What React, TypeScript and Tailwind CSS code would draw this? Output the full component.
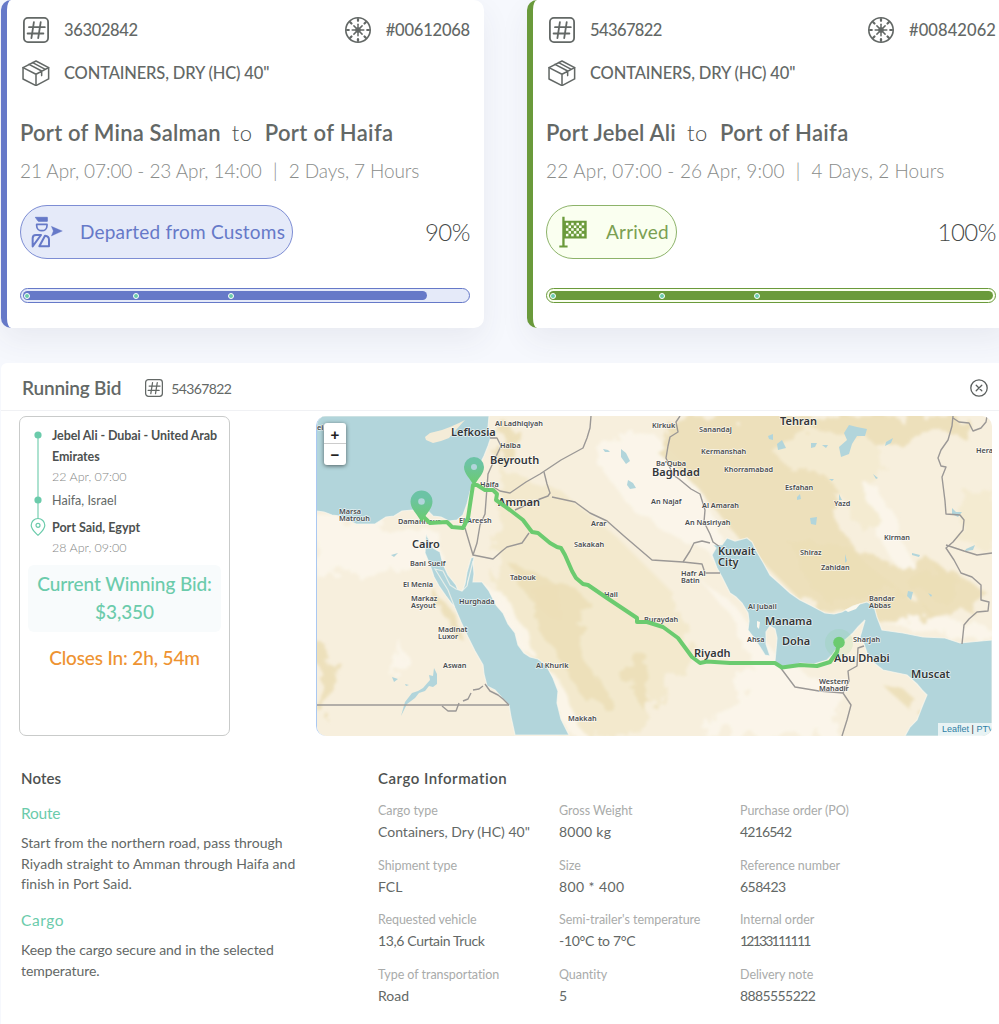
import React from 'react';
import clsx from 'clsx';

function HashIcon({ className }: { className?: string }) {
  return (
    <svg viewBox="0 0 26 26" className={className} fill="none" stroke="#636866" strokeWidth="1.8" strokeLinecap="round">
      <rect x="0.9" y="0.9" width="24.2" height="24.2" rx="4" />
      <path d="M10.9 5.2 8.4 21.2M17.7 5.2l-2.5 16M6 10.2h15.8M4.6 16.5h15.8" />
    </svg>
  );
}

function BoxIcon() {
  return (
    <svg viewBox="67 180 84 80" className="w-7 h-[26.6px]" fill="none" stroke="#636866" strokeWidth="4.6" strokeLinejoin="round" strokeLinecap="round">
      <path d="M109 183l38 20v34l-38 20-39-20v-34z" />
      <path d="M70 203l39 20 38-20M109 223v34M88 193l38 20v14M99 188l38 20" />
    </svg>
  );
}

const spokes = [0, 45, 90, 135, 180, 225, 270, 315];

function WheelIcon() {
  return (
    <svg viewBox="0 0 26 26" className="size-[26px]" fill="none" stroke="#636866" strokeWidth="1.5" strokeLinecap="round">
      <circle cx="13" cy="13" r="12.2" strokeWidth="1.6" />
      <circle cx="13" cy="13" r="2" fill="#636866" />
      {spokes.map((a) => (
        <g key={a} transform={`rotate(${a} 13 13)`}>
          <path d="M13 11V7.2" />
          <path d="M13 3.8V2" strokeWidth="2.2" />
        </g>
      ))}
    </svg>
  );
}

function OfficerIcon() {
  return (
    <svg viewBox="94 76 96 96" className="size-8" fill="none" stroke="#6679c8" strokeWidth="6" strokeLinejoin="round">
      <path d="M107 80h36v12h-27z" fill="#6679c8" strokeWidth="2.5" />
      <path d="M111 101h31v4c0 9-7 15-15.500 15S111 114 111 105z" strokeWidth="5" />
      <path d="M99 167v-24c0-6 4-10 10-10h15zM119 167l17-32c8 1 12 5 12 12v20z" />
      <path d="M155 107l33 14-33 15 6-15z" fill="#6679c8" strokeWidth="1" />
    </svg>
  );
}

function FlagIcon() {
  const cells = [];
  for (let r = 0; r < 5; r++) {
    for (let c = 0; c < 7; c++) {
      if ((r + c) % 2 === 0) {
        cells.push(<rect key={`${r}-${c}`} x={139 + c * 8} y={96 + r * 8.4} width="7.500" height="7.500" fill="#fafff0" />);
      }
    }
  }
  return (
    <svg viewBox="118 76 88 96" className="w-[29px] h-8">
      <path d="M128 78h7v12h67v54h-67v21h9v6h-25v-6h9z" fill="#6a9a3b" />
      {cells}
    </svg>
  );
}

type Shipment = {
  id: string;
  order: string;
  from: string;
  to: string;
  dates: string;
  duration: string;
  status: string;
  percent: string;
  fill: string;
  green?: boolean;
};

const shipments: Shipment[] = [
  {
    id: '36302842',
    order: '#00612068',
    from: 'Port of Mina Salman',
    to: 'Port of Haifa',
    dates: '21 Apr, 07:00 - 23 Apr, 14:00',
    duration: '2 Days, 7 Hours',
    status: 'Departed from Customs',
    percent: '90%',
    fill: '91%',
  },
  {
    id: '54367822',
    order: '#00842062',
    from: 'Port Jebel Ali',
    to: 'Port of Haifa',
    dates: '22 Apr, 07:00 - 26 Apr, 9:00',
    duration: '4 Days, 2 Hours',
    status: 'Arrived',
    percent: '100%',
    fill: '100%',
    green: true,
  },
];

function ShipmentCard({ s }: { s: Shipment }) {
  return (
    <div
      className={clsx(
        'w-[483px] h-[328px] shrink-0 bg-white rounded-[10px] border-l-[6px] pl-[13px] pr-[14px] pt-4 text-[#636866] shadow-[0_12px_30px_rgba(60,60,80,0.07)]',
        s.green ? 'border-[#6a9a3b]' : 'border-[#6679c8]'
      )}
    >
      <div className="flex items-center h-7 text-[16.5px] font-medium">
        <HashIcon className="size-[26px] ml-[3px]" />
        <span className={clsx('ml-[15px]', s.green ? 'tracking-[-0.6px]' : 'tracking-[-0.35px]')}>{s.id}</span>
        <span className="ml-auto">
          <WheelIcon />
        </span>
        <span className={clsx('ml-[15px]', s.green ? 'tracking-[0.1px]' : 'tracking-[-0.2px]')}>{s.order}</span>
      </div>
      <div className="flex items-center h-7 mt-[15px] text-[16.5px] font-medium">
        <span className="ml-[2px]">
          <BoxIcon />
        </span>
        <span className="ml-[14px] tracking-[-0.16px]">CONTAINERS, DRY (HC) 40"</span>
      </div>

      <div className="flex items-center h-8 mt-[29px] text-[22px] whitespace-nowrap">
        <span className="font-semibold tracking-[0.2px]">{s.from}</span>
        <span className="ml-[11px] w-[22px] font-light text-[#4d514f] tracking-[0.5px]">to</span>
        <span className="ml-[11px] font-semibold tracking-[0.35px]">{s.to}</span>
      </div>
      <div className="flex items-center h-7 mt-[9px] text-[19px] font-light text-[#898c8a] whitespace-nowrap">
        <span className={s.green ? 'tracking-[0.2px]' : 'tracking-[-0.08px]'}>{s.dates}</span>
        <span className="w-[27px] text-center">|</span>
        <span className={s.green ? 'tracking-[0.05px]' : 'tracking-[-0.1px]'}>{s.duration}</span>
      </div>

      <div className="flex items-center justify-between mt-5">
        <div
          className={clsx(
            'flex items-center h-[54px] rounded-full border pr-[7px] text-[19px] tracking-[0.2px]',
            s.green ? 'pl-[12px] gap-[18px] border-[#8db36a] bg-[#fafff0] text-[#7aa052]' : 'pl-[10px] gap-[17px] border-[#7d8dd4] bg-[#e5eaf9] text-[#6679c8]'
          )}
        >
          {s.green ? <FlagIcon /> : <OfficerIcon />}
          <span>{s.status}</span>
        </div>
        <span className="text-[24px] font-light text-[#454947] tracking-[-0.5px]">{s.percent}</span>
      </div>

      <div
        className={clsx(
          'relative h-[15px] mt-[29px] rounded-full border-[1.500px] p-[2px]',
          s.green ? 'border-[#6a9a3b] bg-[#fafff0]' : 'border-[#6679c8] bg-[#e5eaf9]'
        )}
      >
        <div className={clsx('h-[9px] rounded-full', s.green ? 'bg-[#6a9a3b]' : 'bg-[#6679c8]')} style={{ width: s.fill }} />
        <span className="absolute left-[3px] top-[3.500px] size-[6px] rounded-full border-[1.500px] border-white bg-[#6bcbab]" />
        <span className="absolute left-[112px] top-[3.500px] size-[6px] rounded-full border-[1.500px] border-white bg-[#6bcbab]" />
        <span className="absolute left-[207px] top-[3.500px] size-[6px] rounded-full border-[1.500px] border-white bg-[#6bcbab]" />
      </div>
    </div>
  );
}

// [label, x, baseline]
const cities: [string, number, number][] = [
  ['Lefkosia', 451, 436],
  ['Beyrouth', 490, 464],
  ['Amman', 498, 506],
  ['Cairo', 412, 548],
  ['Baghdad', 652, 476],
  ['Tehran', 780, 425],
  ['Kuwait', 718, 555],
  ['City', 718, 566],
  ['Riyadh', 694, 657],
  ['Manama', 765, 625],
  ['Doha', 782, 645],
  ['Abu Dhabi', 834, 662],
  ['Muscat', 911, 678],
];

const towns: [string, number, number][] = [
  ['ei', 317, 430],
  ['Al Ladhiqiyah', 495, 426],
  ['Halba', 500, 448],
  ['Haifa', 480, 487],
  ['El Areesh', 459, 523],
  ['Damanhour', 398, 524],
  ['Marsa', 339, 514],
  ['Matrouh', 339, 521],
  ['Bani Sueif', 410, 566],
  ['El Menia', 403, 587],
  ['Markaz', 411, 601],
  ['Asyout', 411, 608],
  ['Hurghada', 459, 604],
  ['Madinat', 438, 632],
  ['Luxor', 438, 639],
  ['Aswan', 443, 668],
  ['Tabouk', 510, 580],
  ['Al Khurik', 536, 668],
  ['Makkah', 568, 721],
  ['Hail', 604, 597],
  ['Buraydah', 644, 622],
  ['Hafr Al', 681, 576],
  ['Batin', 681, 583],
  ['Al Jubail', 748, 609],
  ['Ahsa', 747, 642],
  ['Arar', 591, 526],
  ['Sakakah', 574, 547],
  ['An Najaf', 651, 504],
  ['Al Amarah', 702, 508],
  ['An Nasiriyah', 685, 525],
  ["Ba'Quba", 656, 466],
  ['Kirkuk', 652, 428],
  ['Sanandaj', 699, 432],
  ['Kermanshah', 701, 454],
  ['Khorramabad', 724, 472],
  ['Esfahan', 785, 490],
  ['Yazd', 834, 506],
  ['Kirman', 884, 540],
  ['Shiraz', 800, 555],
  ['Zahidan', 821, 570],
  ['Hera', 976, 453],
  ['Bandar', 869, 601],
  ['Abbas', 869, 608],
  ['Sharjah', 853, 642],
  ['Western', 819, 684],
  ['Mahadir', 819, 691],
];

const seas = [
  'M316 416V511L324 512 332 515 340 516 348 520 356 524 368 524 375 524 386 517 394 516 402 511 412 510 420 512 427 510 433 516 441 517 449 521 457 520 463 515 467 504 470 492 475 478 479 466 484 456 488 446 491 437 488 428 489 416z',
  'M426 534l4 8 3 6 7 4 3 12 5 11 8 10 3 8 3-1 3-8 2-12 4-14 3-1-2 12-4 12-1 12-3 6 4 7-8 4-8-6-6-8-7-10-5-9-4-12-5-12z',
  'M435 569l8 2 7 14 6 4 6 2 5-5 3-13 3-12 1 13-1 8 9 0 7 9 7 14 7 8 5 11 7 9 3 12 6 8 6 4 8 2 8 6 7 13 5 13-1 12 4 16 8 16H515L511 717 509 705 502 698 495 690 487 686 484 674 483 665 475 651 468 637 461 622 455 608 448 590z',
  'M712 555L716 548 713 545 722 545 727 538 735 541 747 538 752 542 757 552 764 564 770 575 779 583 790 593 800 600 810 605 825 613 834 614 842 612 853 606 867 602 874 606 877 617 882 630 903 633 923 637 945 638 960 643 992 640V736H905L910 727 917 720 922 707 927 695 922 690 917 684 907 675 883 670 874 663 867 653 864 644 860 637 865 620 858 627 853 633 845 640 837 648 832 655 827 660 814 664 800 663 788 668 780 666 775 661 776 650 777 638 775 629 770 626 766 632 766 644 770 656 765 655 760 647 754 638 748 630 749 621 748 613 742 603 736 597 730 593 726 585 722 577 717 568z',
];

const borders = [
  'M591 416l-1 12-3 10-4 10-22 12-21 14-14 8-16 11-10-2-8-5',
  'M544 472l3 12 3 9-2 3-8 3-25 11',
  'M552 497l23 5 15 11 17 8 17 15 14 12 14 12 31 2 19 2 3 9h15',
  'M683 562l7-11 4-8 8-2 8 2',
  'M680 416l-4 6 2 10-8 5-2 9-2 12 7 17 6 4 12 10 9 5 5 16-1 12 6 12 3 8 7 5',
  'M473 555l20 4 9-8 5-4 15-4 7-10',
  'M465 528l8 27 4-12 3-18 5-11 3-40 4-9 9-19-4-8-7 0',
  'M316 705h193',
  'M485 684l5 7 8 4 5 4 6 6',
  'M442 706l6 5h8l3-8M463 701l5-2 3-6M473 690l6-1 4-3',
  'M780 667l15 20 24 4 24 2 8 12-4 15-5 16M843 693l6-12-1-10 9-5 1-18 6-2',
  'M953 416l-1 10-4 14-7 10-3 8 3 8 5 1-4 10 3 24 1 13 14 1 4 5-1 10-10 12-7 6 8 12 7 13 11 4 9 8 0 15 8 2-1 9-11 1-8 7-5 6-2 19',
  'M946 545l18 6 13 4 15-2M953 418l6 4 10 1 4 8 8-3 5-6 1-6',
];

const highlands = [
  'M675 416h292l-5 20-60 4-60 16-10 54 20 40 60 50 30 16-50 6-90-20-60-60-50-60-35-30z',
  'M540 596l25-8 20 8 2 18-14 15 20 40 20 40-25-6-20-28-15-28-17-20z',
  'M790 545l60 0 40 20 40-5 30 20-10 20-70-8-50 10-20-12z',
  'M505 560l30 12 30 20-15 25-22-20z',
  'M905 580l50-10 30 20-15 20-40 5z',
  'M880 682l20 4 18 16-8 8-18-16z',
  'M316 640l15 10 5 40-20 20z',
  'M436 590l12 20 15 30-10-6-14-28z',
  'M632 650l20 10-10 20 12 25-10 6-18-26z',
  'M505 425l14 4-8 30-12 8z',
];

const lowlands = [
  'M600 440l50-10 40 40 30 60 10 30-40-12-60-40-30-40z',
  'M862 480l16 6 28 54 6 30-20-10-22-40z',
  'M316 515l60 12 60 0 6 30-40 10-86 10z',
  'M700 580l35 40 20 50-50 66h130l10-50-60-20-50-60z',
  'M520 650l30 50 20 36h14l-24-56z',
  'M485 590l20 5 30 60-15-5z',
  'M885 625l60 10 45 5v-15l-60-8z',
  'M395 640l6 0 0 30-8 10z',
];

const lakes = [
  'M621 449l5 4 4 8-4 3-5-7zM628 480l5 3 3 5-6 1-3-4zM603 449l5 1 2 2-5 0z',
  'M849 425l8 2 10 2-2 7-8 0-5 8-3 10-8 3-2-10 8-7-3-7zM777 444l5-4 4 8-8 2zM811 443l6 0-2 4-4 1zM886 442l7-4-2 5-6 3z',
  'M810 518l7-1-1 8-5-1zM797 497l3-3 1 5-4 1zM822 445l6 0-2 3zM873 474l5 4-2 1zM839 494l3 6-3 0zM829 479l5 0-2 2z',
  'M952 508l4 4 6 0-4 5-6-3zM966 549l9-4-2 5-8 1zM912 553l8 2-1 2-7-2zM908 591l5 1-2 8-4-4zM768 436l5-2 0 6-4-1z',
  'M434 668l3 6 0 10-4 3-4-1-4 5-6 2-4 5-8 6-6 12 4-14 7-9 6-2 5-3 7-8-1-5 4 1zM392 677l6 2-4 3zM405 684l4 1-3 1z',
  'M391 555l7-2-4 4zM845 554l2 7-2 2zM776 411l4 0 0 5-4 0zM928 593l4 2-1 2z',
];

const route =
  'M421.500 515L430 523 447 522 452 527 463 528 468 518 473 485 477 485 485 490 493 490 497 494 496 500 510 510 523 520 532 532 538 533 550 543 557 547 561 548 565 555 572 571 576 578 583 584 588 585 607 598 637 618 637 622 647 622 663 627 678 638 692 657 700 663 707 661.500 730 663 775 663 782 667.500 800 665 817 666 830 662 837 652 839 643';

function Pin({ x, y, r }: { x: number; y: number; r: number }) {
  return (
    <g transform={`translate(${x} ${y}) scale(${r / 10})`}>
      <path d="M0-10a10 10 0 0 1 10 10c0 7-6 11-10 19C-4 11-10 7-10 0A10 10 0 0 1 0-10z" fill="url(#pin)" />
      <circle r="3" fill="#b2d5db" />
    </g>
  );
}

function RouteMap() {
  return (
    <div className="relative w-[676px] h-80 shrink-0 rounded-[10px] overflow-hidden border-l border-[#aac8f2]">
      <svg viewBox="317 416 676 320" className="block w-[676px] h-80">
        <defs>
          <linearGradient id="pin" x1="0" y1="0" x2="0" y2="1">
            <stop offset="0.2" stopColor="#6cc3a5" />
            <stop offset="0.9" stopColor="#6bcb72" />
          </linearGradient>
          <filter id="relief" x="-10%" y="-10%" width="120%" height="120%">
            <feTurbulence type="fractalNoise" baseFrequency="0.045" numOctaves="4" seed="4" />
            <feDisplacementMap in="SourceGraphic" scale="34" />
            <feGaussianBlur stdDeviation="1.8" />
          </filter>
        </defs>
        <rect x="316" y="416" width="677" height="320" fill="#f7efdd" />
        <g filter="url(#relief)">
          <path d="M500 470l60 20 60 50 60 60 10 60-60 76h-70l-30-80-40-80z" fill="#f3e9cd" />
          {lowlands.map((d) => (
            <path key={d} d={d} fill="#fbf7ec" fillOpacity="0.85" />
          ))}
          {highlands.map((d) => (
            <path key={d} d={d} fill="#ecdfb8" fillOpacity="0.9" />
          ))}
          <path d="M790 425l80 15 20 20-30 20 20 40-20 10-30-50-50-20z" fill="#f4ebd1" />
          <path d="M960 500l35-10v60l-35-5z" fill="#f4ebd1" />
        </g>
        {seas.map((d) => (
          <path key={d} d={d} fill="#b2d5db" stroke="#fbf8ee" strokeWidth="1.2" strokeOpacity="0.7" />
        ))}
        <path d="M425 437l5-4 12-3 8-3 9-4 6-3-10 11-6 7-8 3-8 2-7-3z" fill="#f4ecd8" />
        <path d="M757 621l3 1-1 7-2-2zM845 610l8-4 8-3-5 6-8 3z" fill="#fbf8ee" />
        {lakes.map((d) => (
          <path key={d} d={d} fill="#b2d5db" />
        ))}
        {borders.map((d) => (
          <path key={d} d={d} fill="none" stroke="#9b9896" strokeWidth="1.4" strokeLinejoin="round" />
        ))}

        <g fontFamily="'Noto Sans', sans-serif" fill="#333638" stroke="#fff" strokeOpacity="0.7" strokeWidth="1.4" paintOrder="stroke" strokeLinejoin="round">
          <g fontSize="11" fontWeight="600">
            {cities.map(([name, x, y]) => (
              <text key={name} x={x} y={y}>
                {name}
              </text>
            ))}
          </g>
          <g fontSize="7.300" fontWeight="600" fill="#4a4c4e">
            {towns.map(([name, x, y]) => (
              <text key={name} x={x} y={y}>
                {name}
              </text>
            ))}
          </g>
        </g>

        <circle cx="839" cy="643" r="14" fill="#6bcb72" fillOpacity="0.12" />
        <path d={route} fill="none" stroke="#6bcb6f" strokeWidth="4" strokeLinejoin="round" strokeLinecap="round" />
        <circle cx="839" cy="642.500" r="5.800" fill="#6bcb6f" />
        <Pin x={421.5} y={501.5} r={11} />
        <Pin x={474} y={467} r={10} />
      </svg>

      <div className="absolute left-[7px] top-[7px] w-[22px] rounded-[3px] bg-white shadow-[0_1px_4px_rgba(0,0,0,0.55)] font-['Liberation_Sans',sans-serif] text-[15px] font-bold text-center text-[#222]">
        <div className="h-[21px] leading-[24px] border-b border-[#ccc]">+</div>
        <div className="h-[21px] leading-[22px]">−</div>
      </div>
      <div className="absolute left-[621px] bottom-0 h-[13px] pl-1 bg-white/70 font-['Liberation_Sans',sans-serif] text-[9px] leading-[13px] whitespace-nowrap text-[#2e7fa5]">
        Leaflet <span className="text-[#333]">|</span> PTV
      </div>
    </div>
  );
}

function BidSummary() {
  return (
    <div className="w-[211px] h-80 shrink-0 rounded-[7px] border border-[#c9cbca] pt-2 text-[12.500px] text-[#4d5150]">
      <div className="flex pl-[10px]">
        <svg viewBox="0 0 16 112" className="w-4 h-28 mt-[3px]" fill="none">
          <path d="M8 7v84" stroke="#a5dfcb" strokeWidth="1.800" />
          <circle cx="8" cy="7" r="3.600" fill="#6bcbab" />
          <circle cx="8" cy="72" r="3.600" fill="#6bcbab" />
          <path d="M8 90.500a6.800 6.800 0 0 1 6.800 6.800c0 4.200-3.600 7-6.800 10-3.200-3-6.800-5.800-6.800-10A6.800 6.800 0 0 1 8 90.500z" fill="#fff" stroke="#6bcbab" strokeWidth="1.200" />
          <circle cx="8" cy="97.300" r="2" stroke="#6bcbab" strokeWidth="1.200" />
        </svg>
        <div className="ml-[6px] whitespace-nowrap">
          <p className="font-bold leading-[21px] tracking-[-0.09px]">
            Jebel Ali - Dubai - United Arab
            <br />
            Emirates
          </p>
          <p className="leading-[19px] font-light text-[#858786]">22 Apr, 07:00</p>
          <p className="mt-[5px] leading-5 tracking-[0.05px] text-[#636866]">Haifa, Israel</p>
          <p className="mt-[7px] leading-5 font-bold">Port Said, Egypt</p>
          <p className="leading-5 font-light text-[#858786]">28 Apr, 09:00</p>
        </div>
      </div>
      <div className="mx-2 mt-[7px] h-[67px] pt-[5px] rounded-[6px] bg-[#f8fbfc] text-center text-[19px] leading-7 font-medium tracking-[-0.1px] text-[#6bcbab]">
        Current Winning Bid:
        <br />
        $3,350
      </div>
      <p className="mt-3 text-center text-[19px] leading-7 font-medium tracking-[-0.15px] text-[#ee9331]">Closes In: 2h, 54m</p>
    </div>
  );
}

// [label, value, value tracking]
const cargo = [
  ['Cargo type', 'Containers, Dry (HC) 40"', ''],
  ['Gross Weight', '8000 kg', 'tracking-[0.25px]'],
  ['Purchase order (PO)', '4216542', 'tracking-[-0.8px]'],
  ['Shipment type', 'FCL', ''],
  ['Size', '800 * 400', 'tracking-[0.4px]'],
  ['Reference number', '658423', 'tracking-[-0.5px]'],
  ['Requested vehicle', '13,6 Curtain Truck', 'tracking-[-0.36px]'],
  ["Semi-trailer's temperature", '-10°C to 7°C', 'tracking-[-0.3px]'],
  ['Internal order', '12133111111', 'tracking-[-1.800px]'],
  ['Type of transportation', 'Road', ''],
  ['Quantity', '5', ''],
  ['Delivery note', '8885555222', 'tracking-[-0.6px]'],
];

export default function App() {
  return (
    <div className="w-[999px] h-[1024px] overflow-hidden bg-[#f6f8fd] font-['Lato',sans-serif]">
      <div className="flex gap-[43px] pl-px">
        {shipments.map((s) => (
          <ShipmentCard key={s.id} s={s} />
        ))}
      </div>

      <div className="ml-px mt-[35px] h-[661px] bg-white rounded-tl-[6px] text-[#636866]">
        <div className="flex items-center h-12 pt-[3px] pl-[21px] pr-[11px] border-b border-[#f0f1f4]">
          <h2 className="text-[19px] font-semibold tracking-[-0.2px]">Running Bid</h2>
          <HashIcon className="size-[18px] ml-6" />
          <span className="ml-[8px] text-[14px] tracking-[-0.6px]">54367822</span>
          <svg viewBox="0 0 18 18" className="size-[18px] ml-auto" fill="none" stroke="#5b5f5e" strokeWidth="1.300" strokeLinecap="round">
            <circle cx="9" cy="9" r="8.200" />
            <path d="M6.200 6.200l5.600 5.600M11.800 6.200l-5.600 5.600" />
          </svg>
        </div>

        <div className="flex pt-[5px] pl-[18px]">
          <BidSummary />
          <div className="ml-[86px]">
            <RouteMap />
          </div>
        </div>

        <div className="flex pl-5 pt-[31px]">
          <div className="w-[357px] text-[14px]">
            <h3 className="text-[15px] leading-[22px] font-semibold tracking-[0.1px] text-[#4d5150]">Notes</h3>
            <h4 className="mt-[12px] text-[15.500px] leading-6 tracking-[-0.2px] text-[#6bcbab]">Route</h4>
            <p className="mt-2 leading-[20.700px] tracking-[0.03px]">
              Start from the northern road, pass through
              <br />
              Riyadh straight to Amman through Haifa and
              <br />
              finish in Port Said.
            </p>
            <h4 className="mt-[13px] text-[15.500px] leading-6 tracking-[0.6px] text-[#6bcbab]">Cargo</h4>
            <p className="mt-2 leading-[20.700px] tracking-[-0.07px]">
              Keep the cargo secure and in the selected
              <br />
              temperature.
            </p>
          </div>

          <div>
            <h3 className="text-[15px] leading-[22px] font-semibold tracking-[0.5px] text-[#4d5150]">Cargo Information</h3>
            <div className="grid grid-cols-[181px_181px_181px] mt-[11px]">
              {cargo.map(([label, value, tracking]) => (
                <div key={label} className="h-[54.500px] whitespace-nowrap">
                  <p className="text-[12.500px] leading-[21px] tracking-[-0.04px] text-[#a9abaa]">{label}</p>
                  <p className={clsx('text-[14px] leading-[22px]', tracking)}>{value}</p>
                </div>
              ))}
            </div>
          </div>
        </div>
      </div>
    </div>
  );
}
